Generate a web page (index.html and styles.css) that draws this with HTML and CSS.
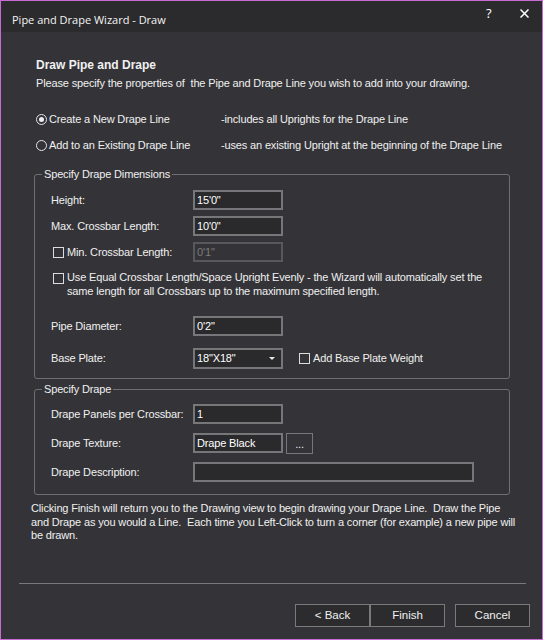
FILE: index.html
```html
<!DOCTYPE html>
<html>
<head>
<meta charset="utf-8">
<link rel="stylesheet" href="styles.css">
</head>
<body>
<div class="window">
  <div class="titlebar">
    <span class="title">Pipe and Drape Wizard - Draw</span>
    <span class="help">?</span>
    <span class="close"><svg width="9" height="9" viewBox="0 0 9 9"><path d="M0.5 0.5 L8.5 8.5 M8.5 0.5 L0.5 8.5" stroke="#ffffff" stroke-width="1.5"/></svg></span>
  </div>
  <div class="content">
    <div class="header">
      <div class="h1">Draw Pipe and Drape</div>
      <div class="sub">Please specify the properties of &nbsp;the Pipe and Drape Line you wish to add into your drawing.</div>
    </div>
    <div class="radios">
      <div class="radio-row">
        <label class="opt"><span class="rb checked"></span>Create a New Drape Line</label>
        <span class="desc">-includes all Uprights for the Drape Line</span>
      </div>
      <div class="radio-row">
        <label class="opt"><span class="rb"></span>Add to an Existing Drape Line</label>
        <span class="desc">-uses an existing Upright at the beginning of the Drape Line</span>
      </div>
    </div>

    <fieldset class="group g1">
      <legend>Specify Drape Dimensions</legend>
      <div class="inner">
        <div class="row">
          <span class="lbl">Height:</span>
          <div class="field">15'0"</div>
        </div>
        <div class="row">
          <span class="lbl">Max. Crossbar Length:</span>
          <div class="field">10'0"</div>
        </div>
        <div class="row">
          <span class="lbl chk-lbl"><span class="cb"></span>Min. Crossbar Length:</span>
          <div class="field disabled">0'1"</div>
        </div>
        <div class="row-text">
          <span class="cb"></span>
          <span class="long">Use Equal Crossbar Length/Space Upright Evenly - the Wizard will automatically set the<br>same length for all Crossbars up to the maximum specified length.</span>
        </div>
        <div class="row pipe">
          <span class="lbl">Pipe Diameter:</span>
          <div class="field">0'2"</div>
        </div>
        <div class="row base">
          <span class="lbl">Base Plate:</span>
          <div class="field select"><span>18"X18"</span><span class="arrow"></span></div>
          <span class="chk-lbl weight"><span class="cb"></span>Add Base Plate Weight</span>
        </div>
      </div>
    </fieldset>

    <fieldset class="group g2">
      <legend>Specify Drape</legend>
      <div class="inner">
        <div class="row">
          <span class="lbl">Drape Panels per Crossbar:</span>
          <div class="field">1</div>
        </div>
        <div class="row">
          <span class="lbl">Drape Texture:</span>
          <div class="field">Drape Black</div>
          <div class="dots">...</div>
        </div>
        <div class="row">
          <span class="lbl">Drape Description:</span>
          <div class="field wide"></div>
        </div>
      </div>
    </fieldset>

    <p class="note">Clicking Finish will return you to the Drawing view to begin drawing your Drape Line. &nbsp;Draw the Pipe<br>and Drape as you would a Line. &nbsp;Each time you Left-Click to turn a corner (for example) a new pipe will<br>be drawn.</p>

    <div class="sep"></div>

    <div class="buttons">
      <div class="btn">&lt; Back</div>
      <div class="btn">Finish</div>
      <div class="btn cancel">Cancel</div>
    </div>
  </div>
</div>
</body>
</html>
```

FILE: styles.css
```css
html, body {
  margin: 0;
  padding: 0;
  background: #343438;
}

body {
  font-family: "Liberation Sans", Arial, sans-serif;
  font-size: 11px;
  line-height: 13px;
  letter-spacing: -0.15px;
  color: #f0f0f0;
}

.window {
  width: 543px;
  height: 640px;
  box-sizing: border-box;
  border: 1px solid #c86bd4;
  background: #343438;
  display: flex;
  flex-direction: column;
  overflow: hidden;
}

.titlebar {
  height: 31px;
  flex: none;
  background: #2b2b2d;
  display: flex;
  align-items: flex-start;
}

.title {
  font-family: "Open Sans", "Noto Sans", sans-serif;
  font-size: 11px;
  line-height: 16px;
  letter-spacing: 0;
  color: #f4f4f4;
  margin: 11px 0 0 11px;
  flex: 1;
}

.help {
  font-family: "Open Sans", "Noto Sans", sans-serif;
  font-size: 13px;
  line-height: 16px;
  font-weight: 400;
  letter-spacing: 0;
  color: #ffffff;
  margin: 4px 0 0 0;
  width: 9px;
}

.close {
  margin: 8px 13px 0 25px;
  width: 9px;
  height: 9px;
  display: flex;
}

.content {
  flex: 1;
  display: flex;
  flex-direction: column;
}

.header {
  padding: 27px 0 0 35px;
}

.h1 {
  font-weight: bold;
  font-size: 12px;
  letter-spacing: 0;
}

.sub {
  margin-top: 5px;
}

.radios {
  margin-top: 22px;
  padding-left: 35px;
  display: flex;
  flex-direction: column;
  gap: 12px;
}

.radio-row {
  display: flex;
  align-items: center;
  height: 14px;
}

.opt {
  width: 185px;
  display: flex;
  align-items: center;
}

.rb {
  width: 11px;
  height: 11px;
  box-sizing: border-box;
  border: 1px solid #e6e6e6;
  border-radius: 50%;
  margin-right: 2px;
  display: flex;
  align-items: center;
  justify-content: center;
}

.rb.checked::after {
  content: "";
  width: 5px;
  height: 5px;
  border-radius: 50%;
  background: #f0f0f0;
}

.group {
  margin: 16px 32px 0 33px;
  padding: 0;
  border: 1px solid #6f6f72;
  border-radius: 3px;
  min-width: 0;
}

.group legend {
  margin-left: 7px;
  padding: 0 2px;
  line-height: 13px;
}

.inner {
  padding: 9px 0 9px 16px;
  display: flex;
  flex-direction: column;
}

.row {
  display: flex;
  align-items: center;
  height: 20px;
}

.g1 .row + .row {
  margin-top: 6px;
}

.lbl {
  width: 142px;
  flex: none;
}

.chk-lbl {
  display: flex;
  align-items: center;
}

.cb {
  width: 11px;
  height: 11px;
  box-sizing: border-box;
  border: 1px solid #dcdcdc;
  margin: 0 3px 0 2px;
  flex: none;
}

.field {
  width: 90px;
  height: 20px;
  box-sizing: border-box;
  border: 2px solid #77777a;
  background: #2a2a2c;
  color: #ffffff;
  padding: 0 0 0 2px;
  display: flex;
  align-items: center;
  flex: none;
}

.field.disabled {
  border-color: #58585b;
  background: #343438;
  color: #7c7c7c;
}

.field.select {
  height: 21px;
  justify-content: space-between;
  padding-right: 6px;
}

.arrow {
  width: 0;
  height: 0;
  border-left: 3px solid transparent;
  border-right: 3px solid transparent;
  border-top: 3px solid #e8e8e8;
}

.row-text {
  display: flex;
  align-items: flex-start;
  margin-top: 9px;
}

.row-text .cb {
  margin-top: 2px;
}

.long {
  line-height: 13.5px;
}

.g1 .inner .row.pipe {
  margin-top: 18px;
}

.g1 .inner .row.base {
  margin-top: 12px;
  height: 21px;
}

.weight {
  margin-left: 14px;
}

.g2 {
  margin-top: 4px;
}

.g2 .inner {
  padding: 8px 0 12px 16px;
}

.g2 .row + .row {
  margin-top: 9px;
}

.dots {
  width: 27px;
  height: 21px;
  box-sizing: border-box;
  border: 1px solid #77777a;
  margin-left: 3px;
  display: flex;
  align-items: flex-end;
  justify-content: center;
  padding-bottom: 5px;
  line-height: 8px;
}

.field.wide {
  width: 281px;
}

.note {
  margin: 7px 0 0 30px;
  line-height: 13.5px;
}

.sep {
  margin: 40px 0 0 18px;
  width: 507px;
  height: 1px;
  background: #7a7a7c;
}

.buttons {
  margin-top: 20px;
  display: flex;
  justify-content: flex-end;
  padding-right: 12px;
}

.btn {
  width: 75px;
  height: 23px;
  box-sizing: border-box;
  border: 1px solid #7a7a7c;
  background: #2c2c2e;
  display: flex;
  align-items: center;
  justify-content: center;
  font-size: 11.5px;
  letter-spacing: 0;
}

.btn.cancel {
  margin-left: 10px;
}
```
